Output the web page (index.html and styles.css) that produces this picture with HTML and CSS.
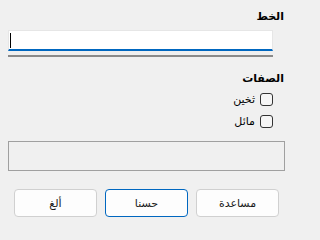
FILE: index.html
```html
<!DOCTYPE html>
<html lang="ar">
<head>
<meta charset="utf-8">
<link rel="stylesheet" href="styles.css">
</head>
<body>
<div class="dlg" dir="rtl">
  <div class="label font-label">الخط</div>
  <div class="textbox"><span class="caret"></span></div>
  <div class="sep"></div>
  <div class="label attr-label">الصفات</div>
  <div class="checks">
    <label class="check"><span class="box"></span><span class="ctext">ثخين</span></label>
    <label class="check"><span class="box"></span><span class="ctext">مائل</span></label>
  </div>
  <div class="preview"></div>
  <div class="buttons">
    <button class="btn">مساعدة</button>
    <button class="btn default">حسنا</button>
    <button class="btn">ألغ</button>
  </div>
</div>
</body>
</html>
```

FILE: styles.css
```css
html, body {
  margin: 0;
  padding: 0;
  background: #f0f0f0;
}
body {
  font-family: "DejaVu Sans", "Noto Sans", sans-serif;
  font-size: 11px;
  color: #000;
}
.dlg {
  width: 293px;
  height: 231px;
  direction: rtl;
  display: flex;
  flex-direction: column;
  padding-top: 9px;
  box-sizing: border-box;
}
.label {
  font-weight: bold;
  height: 15px;
  line-height: 15px;
  margin-right: 9px;
}
.textbox {
  box-sizing: border-box;
  height: 21px;
  margin: 6px 20px 0 8px;
  background: #fff;
  border: 1px solid #e6e6e6;
  border-bottom: 2px solid #0067c0;
  display: flex;
  justify-content: flex-end;
  align-items: center;
}
.caret {
  width: 1px;
  height: 15px;
  background: #000;
  margin-left: 1px;
}
.sep {
  height: 2px;
  margin: 4px 20px 0 8px;
  background: #8a8a8a;
}
.attr-label {
  margin-top: 14px;
}
.checks {
  display: flex;
  flex-direction: column;
  margin-top: 2px;
  margin-right: 20px;
}
.check {
  height: 22px;
  display: flex;
  align-items: center;
  gap: 5px;
}
.box {
  box-sizing: border-box;
  width: 13px;
  height: 13px;
  border: 1px solid #333;
  border-radius: 3px;
  background: #f6f6f6;
}
.ctext {
  line-height: 15px;
}
.preview {
  box-sizing: border-box;
  height: 30px;
  margin: 9px 8px 0 8px;
  border: 1px solid #a0a0a0;
}
.buttons {
  display: flex;
  gap: 8px;
  margin: 18px 14px 0 14px;
}
.btn {
  box-sizing: border-box;
  width: 83px;
  height: 28px;
  background: #fdfdfd;
  border: 1px solid #d0d0d0;
  border-radius: 4px;
  font-family: "DejaVu Sans", sans-serif;
  font-size: 11px;
  color: #1a1a1a;
  padding: 0;
}
.btn.default {
  border-color: #0067c0;
}
```
